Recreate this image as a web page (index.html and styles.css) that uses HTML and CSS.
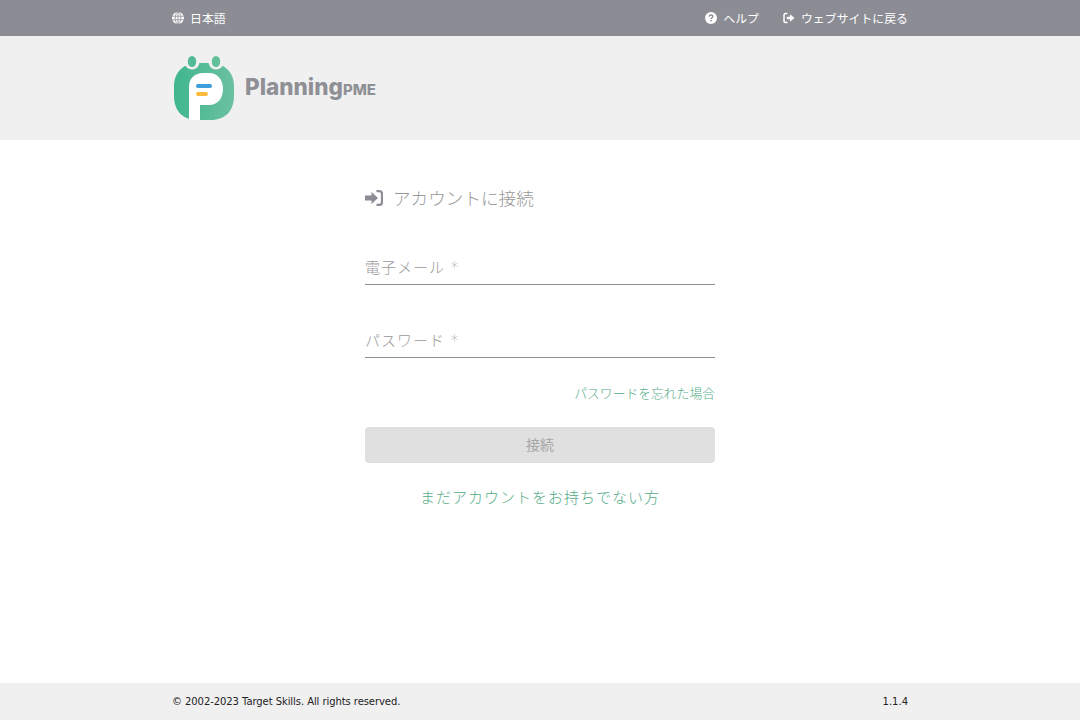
FILE: index.html
```html
<!DOCTYPE html>
<html lang="ja">
<head>
    <meta charset="UTF-8">
    <meta name="viewport" content="width=device-width, initial-scale=1.0">
    <title>PlanningPME</title>
    <link rel="stylesheet" href="styles.css">
</head>
<body>
    <div class="top-bar">
        <div class="wrap top-bar-inner">
            <a class="top-link" href="#">
                <svg class="top-icon" viewBox="0 0 12 12">
                    <circle cx="6" cy="6" r="6" fill="#fff"/>
                    <path d="M0 4.200h12M0 7.800h12M6 0v12" stroke="#8b8c94" stroke-width=".8" fill="none"/>
                    <ellipse cx="6" cy="6" rx="2.800" ry="6" stroke="#8b8c94" stroke-width=".8" fill="none"/>
                </svg>
                <span class="top-label">日本語</span>
            </a>
            <div class="top-right">
                <a class="top-link" href="#">
                    <svg class="top-icon" viewBox="0 0 12 12">
                        <circle cx="6" cy="6" r="6" fill="#fff"/>
                        <path d="M4.200 4.600C4.300 3.500 5 3 6 3s1.900.6 1.900 1.500C7.900 5.800 6 5.700 6 7.100" stroke="#8b8c94" stroke-width="1.300" fill="none"/>
                        <rect x="5.300" y="8" width="1.400" height="1.400" fill="#8b8c94"/>
                    </svg>
                    <span class="top-label">ヘルプ</span>
                </a>
                <a class="top-link" href="#">
                    <svg class="top-icon" viewBox="0 0 12 12">
                        <path d="M4.500 1.500H2.500A1.500 1.500 0 0 0 1 3v6a1.500 1.500 0 0 0 1.500 1.500h2" stroke="#fff" stroke-width="1.500" fill="none"/>
                        <path d="M3.800 4.700H7V2.300L11.500 6 7 9.700V7.300H3.800z" fill="#fff"/>
                    </svg>
                    <span class="top-label">ウェブサイトに戻る</span>
                </a>
            </div>
        </div>
    </div>

    <header class="brand-bar">
        <div class="wrap brand-inner">
            <svg class="logo-mark" viewBox="0 0 60 67">
                <defs>
                    <linearGradient id="logoGrad" x1="0" y1="0" x2="1" y2="0">
                        <stop offset="0" stop-color="#3fb68f"/>
                        <stop offset="1" stop-color="#6cc19f"/>
                    </linearGradient>
                </defs>
                <path d="M24 9H36C50 9 60 18 60 32V42C60 57 51 66 37 66H23C9 66 0 57 0 42V32C0 18 10 9 24 9z" fill="url(#logoGrad)"/>
                <circle cx="18" cy="8" r="7.500" fill="#f0f0f0"/>
                <circle cx="42" cy="8" r="7.500" fill="#f0f0f0"/>
                <ellipse cx="18" cy="7.500" rx="4.200" ry="5.500" fill="#52ba95"/>
                <ellipse cx="42" cy="7.500" rx="4.200" ry="5.500" fill="#62bf9c"/>
                <path d="M15 66V33C15 24 21 19 29 19H35C44 19 49 26 49 35C49 44 44 51 35 51H26V66z" fill="#fff"/>
                <rect x="22" y="30" width="16" height="4" rx="2" fill="#3f9fdc"/>
                <rect x="22" y="38" width="12" height="4" rx="2" fill="#fbbc3c"/>
            </svg>
            <div class="logo-text">Planning<span class="logo-pme">PME</span></div>
        </div>
    </header>

    <main class="login-main">
        <h1 class="login-title">
            <svg class="login-icon" viewBox="0 0 18 16">
                <path d="M0 5.500H6.500V2L13 8 6.500 14V10.500H0z" fill="#8b8c94"/>
                <path d="M11.500 1.200H14.500A2.500 2.500 0 0 1 17 3.700V12.300A2.500 2.500 0 0 1 14.500 14.800H11.500" stroke="#8b8c94" stroke-width="2.200" fill="none"/>
            </svg>
            アカウントに接続
        </h1>

        <form class="login-form">
            <label class="field">電子メール *</label>
            <label class="field">パスワード *</label>
            <div class="forgot-row"><a class="forgot-link" href="#">パスワードを忘れた場合</a></div>
            <button type="button" class="login-btn" disabled>接続</button>
            <a class="signup-link" href="#">まだアカウントをお持ちでない方</a>
        </form>
    </main>

    <footer class="footer">
        <div class="wrap footer-inner">
            <span class="copyright">© 2002-2023 Target Skills. All rights reserved.</span>
            <span>1.1.4</span>
        </div>
    </footer>
</body>
</html>
```

FILE: styles.css
```css
* {
    margin: 0;
    padding: 0;
    box-sizing: border-box;
}

body {
    font-family: "DejaVu Sans", "Noto Sans CJK JP", sans-serif;
    background: white;
    height: 720px;
    display: flex;
    flex-direction: column;
    overflow: hidden;
}

a {
    text-decoration: none;
}

.wrap {
    width: 736px;
    margin: 0 auto;
}

.top-bar {
    background: #8b8c94;
    height: 36px;
}

.top-bar-inner {
    height: 100%;
    display: flex;
    align-items: center;
    justify-content: space-between;
}

.top-right {
    display: flex;
    gap: 24px;
}

.top-link {
    color: white;
    font-size: 11.9px;
    display: flex;
    align-items: center;
    gap: 6px;
}

.top-label {
    margin-bottom: 2px;
}

.top-icon {
    width: 12px;
    height: 12px;
}

.brand-bar {
    background: #f0f0f0;
    height: 104px;
}

.brand-inner {
    height: 100%;
    display: flex;
    align-items: flex-start;
    padding: 18px 0 0 2px;
}

.logo-mark {
    width: 60px;
    height: 67px;
}

.logo-text {
    margin: 19px 0 0 11px;
    font-family: Inter, sans-serif;
    font-size: 22.5px;
    font-weight: 800;
    color: #8f9096;
}

.logo-pme {
    font-size: 15px;
    font-weight: 800;
}

.login-main {
    flex: 1;
    width: 350px;
    margin: 0 auto;
    padding-top: 46px;
}

.login-title {
    display: flex;
    align-items: center;
    gap: 10px;
    height: 22px;
    font-size: 17.6px;
    font-weight: 300;
    color: #999;
}

.login-icon {
    width: 18px;
    height: 16px;
    margin-top: 2px;
}

.login-form {
    display: flex;
    flex-direction: column;
    margin-top: 40px;
}

.field {
    height: 37px;
    margin-bottom: 36px;
    padding-top: 8px;
    border-bottom: 1px solid #8f8f8f;
    font-size: 15px;
    font-weight: 300;
    letter-spacing: 1px;
    color: #999;
}

.forgot-row {
    text-align: right;
    margin-top: -11px;
    height: 18px;
}

.forgot-link {
    font-size: 12.8px;
    font-weight: 300;
    color: #55ab87;
}

.login-btn {
    height: 36px;
    margin-top: 26px;
    padding-bottom: 3px;
    border: none;
    border-radius: 4px;
    background: #e0e0e0;
    color: #a6a6a6;
    font-family: inherit;
    font-size: 14px;
}

.signup-link {
    margin-top: 23px;
    text-align: center;
    font-size: 15px;
    font-weight: 300;
    letter-spacing: 1px;
    color: #55ab87;
}

.footer {
    background: #f0f0f0;
    height: 37px;
}

.footer-inner {
    height: 100%;
    display: flex;
    align-items: center;
    justify-content: space-between;
    font-size: 10px;
    color: #222;
}

.copyright {
    letter-spacing: -0.07px;
}
```
